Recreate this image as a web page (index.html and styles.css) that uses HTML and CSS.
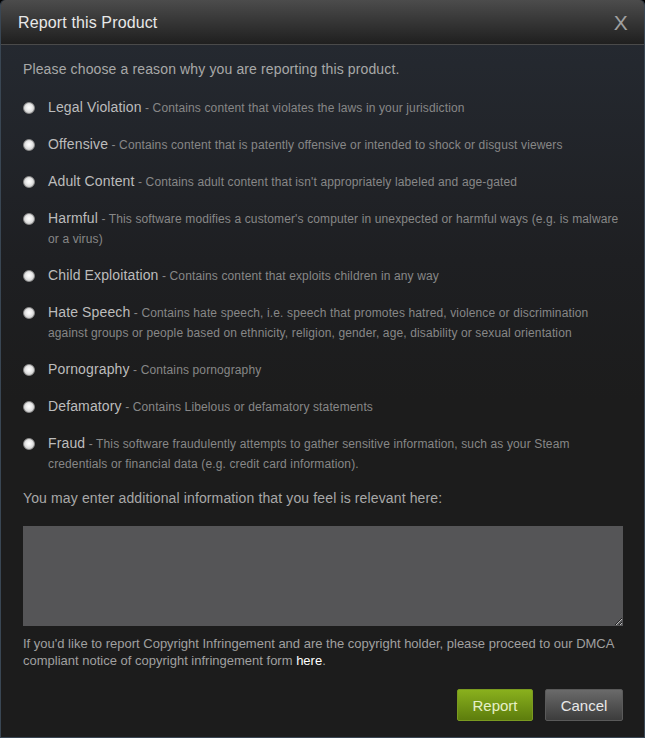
FILE: index.html
```html
<!DOCTYPE html>
<html lang="en">
<head>
    <meta charset="UTF-8">
    <meta name="viewport" content="width=device-width, initial-scale=1.0">
    <title>Report this Product</title>
    <link rel="stylesheet" href="styles.css">
</head>
<body>
    <div class="modal">
        <!-- Cabecera -->
        <div class="modal-header">
            <span class="modal-title">Report this Product</span>
            <span class="modal-close">X</span>
        </div>

        <div class="modal-body">
            <p class="intro">Please choose a reason why you are reporting this product.</p>

            <!-- Motivos -->
            <ul class="reasons">
                <li><input type="radio" name="reason"><label><span class="name">Legal Violation</span> - Contains content that violates the laws in your jurisdiction</label></li>
                <li><input type="radio" name="reason"><label><span class="name">Offensive</span> - Contains content that is patently offensive or intended to shock or disgust viewers</label></li>
                <li><input type="radio" name="reason"><label><span class="name">Adult Content</span> - Contains adult content that isn't appropriately labeled and age-gated</label></li>
                <li><input type="radio" name="reason"><label><span class="name">Harmful</span> - This software modifies a customer's computer in unexpected or harmful ways (e.g. is malware or a virus)</label></li>
                <li><input type="radio" name="reason"><label><span class="name">Child Exploitation</span> - Contains content that exploits children in any way</label></li>
                <li><input type="radio" name="reason"><label><span class="name">Hate Speech</span> - Contains hate speech, i.e. speech that promotes hatred, violence or discrimination against groups or people based on ethnicity, religion, gender, age, disability or sexual orientation</label></li>
                <li><input type="radio" name="reason"><label><span class="name">Pornography</span> - Contains pornography</label></li>
                <li><input type="radio" name="reason"><label><span class="name">Defamatory</span> - Contains Libelous or defamatory statements</label></li>
                <li><input type="radio" name="reason"><label><span class="name">Fraud</span> - This software fraudulently attempts to gather sensitive information, such as your Steam credentials or financial data (e.g. credit card information).</label></li>
            </ul>

            <p class="extra">You may enter additional information that you feel is relevant here:</p>
            <textarea class="details"></textarea>

            <p class="dmca">If you'd like to report Copyright Infringement and are the copyright holder, please proceed to our DMCA compliant notice of copyright infringement form <a href="#">here</a>.</p>

            <!-- Botones -->
            <div class="actions">
                <button class="btn report">Report</button>
                <button class="btn cancel">Cancel</button>
            </div>
        </div>
    </div>
</body>
</html>
```

FILE: styles.css
```css
html, body {
    margin: 0;
    padding: 0;
    background: #000;
}
body {
    font-family: "Liberation Sans", Arial, sans-serif;
    letter-spacing: 0.13px;
    width: 645px;
    height: 738px;
}
.modal {
    box-sizing: border-box;
    width: 645px;
    height: 738px;
    border: 1px solid #394653;
    border-top: none;
    border-radius: 5px 5px 0 0;
    background: linear-gradient(#262b33 0px, #1e1f22 260px, #1c1c1c 400px);
    overflow: hidden;
}
.modal-header {
    height: 44px;
    border-bottom: 1px solid #4a4a4a;
    background: linear-gradient(#4c4c4c, #1f1f1f);
    display: flex;
    align-items: center;
    justify-content: space-between;
    padding: 0 16px 0 17px;
    border-radius: 5px 5px 0 0;
}
.modal-title {
    color: #e8e8e8;
    font-size: 16px;
    margin-top: 1px;
}
.modal-close {
    color: #a0a0a0;
    font-size: 21px;
    margin-top: 2px;
}
.modal-body {
    padding: 14px 21px 0 22px;
}
.intro, .extra {
    margin: 0;
    color: #a8a8a8;
    font-size: 14px;
    line-height: 20px;
}
.reasons {
    list-style: none;
    margin: 19px 0 0;
    padding: 0;
    display: flex;
    flex-direction: column;
    gap: 17px;
}
.reasons li {
    display: flex;
    align-items: flex-start;
}
.reasons input {
    -webkit-appearance: none;
    appearance: none;
    width: 12px;
    height: 12px;
    margin: 4px 13px 0 0;
    flex: none;
    border-radius: 50%;
    border: 1px solid #8c8c8c;
    background: radial-gradient(circle at 50% 45%, #ffffff 0, #eeeeee 35%, #b8b8b8 100%);
}
.reasons label {
    color: #878787;
    font-size: 12px;
    line-height: 20px;
}
.reasons .name {
    color: #bcbcbc;
    font-size: 14px;
    line-height: 16px;
}
.extra {
    margin-top: 14px;
}
.details {
    display: block;
    box-sizing: border-box;
    width: 600px;
    height: 100px;
    margin-top: 18px;
    border: none;
    background: #555557;
    color: #ddd;
    resize: vertical;
}
.dmca {
    margin: 9px 0 0;
    color: #a0a0a0;
    font-size: 13px;
    line-height: 17px;
    letter-spacing: 0;
}
.dmca a {
    color: #fff;
    text-decoration: none;
}
.actions {
    display: flex;
    justify-content: flex-end;
    gap: 12px;
    margin-top: 20px;
}
.btn {
    height: 32px;
    padding: 0;
    font-family: "Liberation Sans", Arial, sans-serif;
    font-size: 15px;
    border-radius: 2px;
    cursor: pointer;
}
.btn.report {
    width: 76px;
    color: #e6f0c8;
    border: 1px solid #7a9a20;
    background: linear-gradient(#89b01d, #5d7d0d);
}
.btn.cancel {
    width: 78px;
    color: #e8e8e8;
    border: 1px solid #5a5a5a;
    background: linear-gradient(#6a6a6a, #3c3c3c);
}
```
